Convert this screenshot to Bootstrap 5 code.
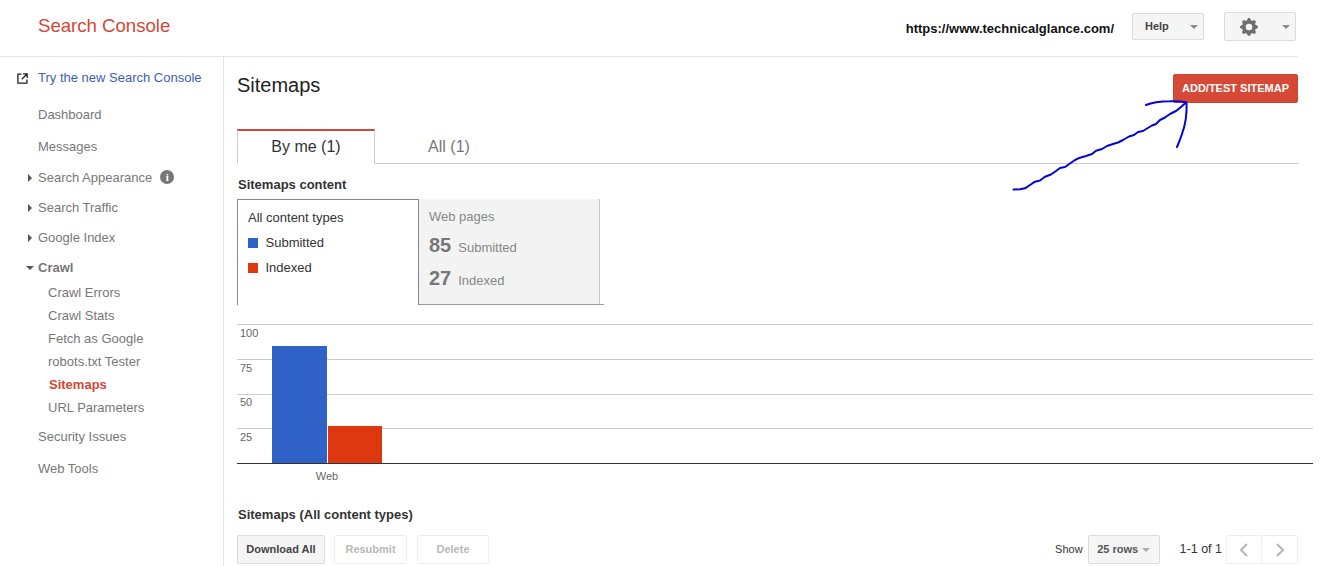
<!DOCTYPE html>
<html lang="en">
<head>
<meta charset="utf-8">
<title>Sitemaps - Search Console</title>
<link rel="stylesheet" href="https://cdn.jsdelivr.net/npm/bootstrap@5.3.0/dist/css/bootstrap.min.css">
<style>
html,body{height:566px;overflow:hidden;background:#fff}
body{font-family:"Liberation Sans",Arial,sans-serif;font-size:13px;color:#333;position:relative}
.topbar{width:1298px;height:57px;border-bottom:1px solid #e5e5e5}
.brand{margin-left:38px;margin-top:-4px;font-size:18.6px;color:#d14836;line-height:24px}
.topactions{padding-bottom:3px}
.siteurl{font-size:13px;font-weight:700;color:#111;margin-top:4px;margin-right:18px}
.gbtn{display:flex;align-items:center;justify-content:center;padding:0;border-radius:2px;font-size:11px;font-weight:700;line-height:1;--bs-btn-border-radius:2px}
.gbtn-grey{background:#f5f5f5;border:1px solid #dcdcdc;color:#444}
.gbtn-off{background:#fff;border:1px solid #eee;color:#b8b8b8}
.caretd{width:0;height:0;border-left:4px solid transparent;border-right:4px solid transparent;border-top:4px solid #888}
.helpbtn{width:72px;height:27px;justify-content:flex-start;padding-left:12px;margin-right:20px}
.helpbtn .caretd{margin-left:21px}
.gearbtn{width:72px;height:29px;margin-right:2px;justify-content:flex-start;padding-left:15px}
.gearbtn .caretd{margin-left:24px}
.shell{height:509px}
.sidenav{width:224px;flex:none;border-right:1px solid #e5e5e5;font-size:13px;color:#777;padding-top:11px}
.navrow{line-height:20px;height:20px;padding-left:38px;position:relative;white-space:nowrap}
.navrow .tri{position:absolute;left:28px;top:6px;width:0;height:0;border-top:4px solid transparent;border-bottom:4px solid transparent;border-left:4px solid #555}
.navrow .tri-open{left:26px;top:8px;border-left:4px solid transparent;border-right:4px solid transparent;border-top:4px solid #555;border-bottom:0}
.newlink{color:#3b5fb5;text-decoration:none}
.extico{position:absolute;left:17px;top:5px}
.infoico{display:inline-block;width:14px;height:14px;border-radius:50%;background:#777;color:#fff;font:700 11px/14px "Liberation Serif",serif;text-align:center;margin-left:8px;vertical-align:1px}
.crawlhead{font-weight:700}
.subrow{line-height:23px;height:23px;padding-left:48px;white-space:nowrap}
.subrow-on{color:#d14836;font-weight:700;padding-left:49px}
.g17{margin-top:17px}.g12{margin-top:12px}.g11{margin-top:11px}.g10{margin-top:10px}.g3{margin-top:3px}.g8{margin-top:8px}
.mainpane{width:1074px;flex:none;padding:17px 0 0 13px}
.pagetitle{font-size:20px;line-height:24px;color:#222;margin:-1px 0 0 0;font-weight:400}
.addbtn{width:125px;height:29px;background:#d64937;border:1px solid #c94635;color:#fff;font-size:11px;font-weight:700;border-radius:2px}
.addbtn:hover{background:#d64937;color:#fff}
.sheettabs{margin-top:26px;height:35px;border-bottom:1px solid #ccc;font-size:16px;flex-wrap:nowrap}
.sheettabs .nav-link{height:35px;width:148px;padding:0;display:flex;align-items:center;justify-content:center;color:#777;border:0;border-radius:0;margin:0}
.sheettabs .nav-link.active{width:138px;color:#333;background:#fff;border-top:2px solid #d14836;border-left:1px solid #ccc;border-right:1px solid #ccc;border-bottom:1px solid #fff}
.sectionhead{font-size:13px;font-weight:700;color:#333;line-height:20px;margin:11px 0 0 1px}
.statbox{margin-top:4px;height:106px}
.statleft{width:182px;height:106px;border:1px solid #888;border-bottom:0;padding:8px 10px;background:#fff}
.statright{width:185px;height:106px;border-bottom:1px solid #999}
.statgrey{width:181px;height:105px;background:#f3f3f3;border-right:1px solid #c8c8c8;padding:8px 10px;color:#888}
.legline{line-height:20px;height:20px}
.legline+.legline{margin-top:5px}
.swatch{display:inline-block;width:10px;height:10px;margin-right:7.5px;vertical-align:-0.5px}
.bg-sub{background:#3062c8}.bg-idx{background:#dd3810}
.bignum{font-size:20px;font-weight:700;color:#777;margin-right:7px}
.statline{line-height:26px;height:26px;margin-top:5px}
.statline+.statline{margin-top:7px}
.chartbox{margin-top:19px;width:1076px;position:relative;border-bottom:1px solid #333;color:#666;font-size:11px}
.gridrow{border-top:1px solid #ccc;padding-left:3px;line-height:16px;box-sizing:border-box}
.gridrow-up{line-height:14px}
.h35{height:35px}.h34{height:34px}
.colbar{position:absolute;bottom:0}
.bar-a{left:35px;width:55px;height:117px}
.bar-b{left:91px;width:54px;height:37px}
.axislabel{width:110px;margin-left:35px;text-align:center;color:#666;font-size:11px;line-height:14px;margin-top:5px}
.lowerhead{margin-top:22px;line-height:20px}
.toolbar{margin-top:10px;height:29px}
.toolbar .gbtn{height:29px}
.dlbtn{width:88px;margin-right:9px}
.rsbtn{width:73px;margin-right:10px}
.delbtn{width:72px}
.showlbl{font-size:11px;color:#333;margin-right:5px}
.rowsbtn{width:72px;color:#555}
.rowsbtn .caretd{margin-left:4px;border-top-color:#aaa}
.pagecount{margin:0 4px 0 20px;font-size:12.5px;color:#333}
.pgbtn{width:36px}
.pgbtn+.pgbtn{margin-left:-1px;width:37px}
.arrowlay{position:absolute;left:0;top:0;pointer-events:none}
</style>
</head>
<body>
<header class="topbar d-flex align-items-center">
  <div class="brand">Search Console</div>
  <div class="ms-auto d-flex align-items-center topactions">
    <span class="siteurl">https://www.technicalglance.com/</span>
    <button type="button" class="btn gbtn gbtn-grey helpbtn">Help<span class="caretd"></span></button>
    <button type="button" class="btn gbtn gbtn-grey gearbtn" aria-label="Settings">
      <svg width="18" height="18" viewBox="0 0 16 16" fill="#6f6f6f"><path fill-rule="evenodd" d="M9.405 1.05c-.413-1.4-2.397-1.4-2.81 0l-.1.34a1.464 1.464 0 0 1-2.105.872l-.31-.17c-1.283-.698-2.686.705-1.987 1.987l.169.311c.446.82.023 1.841-.872 2.105l-.34.1c-1.4.413-1.4 2.397 0 2.81l.34.1a1.464 1.464 0 0 1 .872 2.105l-.17.31c-.698 1.283.705 2.686 1.987 1.987l.311-.169a1.464 1.464 0 0 1 2.105.872l.1.34c.413 1.4 2.397 1.4 2.81 0l.1-.34a1.464 1.464 0 0 1 2.105-.872l.31.17c1.283.698 2.686-.705 1.987-1.987l-.169-.311a1.464 1.464 0 0 1 .872-2.105l.34-.1c1.4-.413 1.4-2.397 0-2.81l-.34-.1a1.464 1.464 0 0 1-.872-2.105l.17-.31c.698-1.283-.705-2.686-1.987-1.987l-.311.169a1.464 1.464 0 0 1-2.105-.872l-.1-.34zM8 10.93a2.929 2.929 0 1 1 0-5.86 2.929 2.929 0 0 1 0 5.858z"/></svg>
      <span class="caretd"></span>
    </button>
  </div>
</header>
<div class="shell d-flex">
  <nav class="sidenav">
    <div class="navrow">
      <svg class="extico" width="11" height="11" viewBox="0 0 11 11" fill="none" stroke="#222" stroke-width="1.3"><path d="M4.5 1.2H.9v9h9V6.5M6 .8h4.2V5M10 1 4.8 6.2"/></svg>
      <a class="newlink" href="#">Try the new Search Console</a>
    </div>
    <div class="navrow g17">Dashboard</div>
    <div class="navrow g12">Messages</div>
    <div class="navrow g11"><span class="tri"></span>Search Appearance<span class="infoico">i</span></div>
    <div class="navrow g10"><span class="tri"></span>Search Traffic</div>
    <div class="navrow g10"><span class="tri"></span>Google Index</div>
    <div class="navrow g10 crawlhead"><span class="tri tri-open"></span>Crawl</div>
    <div class="subrow g3">Crawl Errors</div>
    <div class="subrow">Crawl Stats</div>
    <div class="subrow">Fetch as Google</div>
    <div class="subrow">robots.txt Tester</div>
    <div class="subrow subrow-on">Sitemaps</div>
    <div class="subrow">URL Parameters</div>
    <div class="navrow g8">Security Issues</div>
    <div class="navrow g12">Web Tools</div>
  </nav>
  <main class="mainpane">
    <div class="d-flex justify-content-between align-items-start">
      <h1 class="pagetitle">Sitemaps</h1>
      <button type="button" class="btn gbtn addbtn">ADD/TEST SITEMAP</button>
    </div>
    <ul class="nav nav-tabs sheettabs">
      <li class="nav-item"><a class="nav-link active" href="#">By me (1)</a></li>
      <li class="nav-item"><a class="nav-link" href="#">All (1)</a></li>
    </ul>
    <div class="sectionhead">Sitemaps content</div>
    <div class="statbox d-flex">
      <div class="statleft">
        <div class="legline">All content types</div>
        <div class="legline"><span class="swatch bg-sub"></span>Submitted</div>
        <div class="legline"><span class="swatch bg-idx"></span>Indexed</div>
      </div>
      <div class="statright">
        <div class="statgrey">
          <div class="legline">Web pages</div>
          <div class="statline"><span class="bignum">85</span>Submitted</div>
          <div class="statline"><span class="bignum">27</span>Indexed</div>
        </div>
      </div>
    </div>
    <div class="chartbox">
      <div class="gridrow h35">100</div>
      <div class="gridrow h35">75</div>
      <div class="gridrow gridrow-up h34">50</div>
      <div class="gridrow h35">25</div>
      <div class="colbar bar-a bg-sub"></div>
      <div class="colbar bar-b bg-idx"></div>
    </div>
    <div class="axislabel">Web</div>
    <div class="sectionhead lowerhead">Sitemaps (All content types)</div>
    <div class="toolbar d-flex align-items-center">
      <button type="button" class="btn gbtn gbtn-grey dlbtn">Download All</button>
      <button type="button" class="btn gbtn gbtn-off rsbtn">Resubmit</button>
      <button type="button" class="btn gbtn gbtn-off delbtn">Delete</button>
      <span class="ms-auto showlbl">Show</span>
      <button type="button" class="btn gbtn gbtn-grey rowsbtn">25 rows<span class="caretd"></span></button>
      <span class="pagecount">1-1 of 1</span>
      <button type="button" class="btn gbtn gbtn-off pgbtn" aria-label="Previous"><svg width="10" height="14" viewBox="0 0 10 14" fill="none" stroke="#b5b5b5" stroke-width="2"><path d="M8 1 2 7l6 6"/></svg></button>
      <button type="button" class="btn gbtn gbtn-off pgbtn" aria-label="Next"><svg width="10" height="14" viewBox="0 0 10 14" fill="none" stroke="#b5b5b5" stroke-width="2"><path d="m2 1 6 6-6 6"/></svg></button>
    </div>
  </main>
</div>
<svg class="arrowlay" width="1340" height="566" fill="none" stroke="#0505d0" stroke-width="2" stroke-linecap="round" stroke-linejoin="round">
  <path d="M1013.5 189.5 1020 189.3 1025 188.3 1030 185 1035 181.7 1040 180.5 1045 176.7 1051 174.5 1056 171 1060 168 1065 167 1070 163.5 1075 160 1080 157.7 1086 156 1092 154 1096 150.7 1102 149 1107 146 1113 144 1118 142.5 1123 140 1129 136.5 1134 135 1138 132 1143 131 1147 128.5 1152 125.5 1156 124 1160 120 1165 117.5 1170 114 1176 111 1181 107 1186 102.5"/>
  <path d="M1146 105C1152 102.5 1160 101.5 1170 101.3 1177 101 1183 101.5 1186.5 102.5 1187 113 1185 126 1182 134 1180 140 1178.5 143.5 1177 147"/>
</svg>
<script src="https://cdn.jsdelivr.net/npm/bootstrap@5.3.0/dist/js/bootstrap.bundle.min.js"></script>
</body>
</html>
